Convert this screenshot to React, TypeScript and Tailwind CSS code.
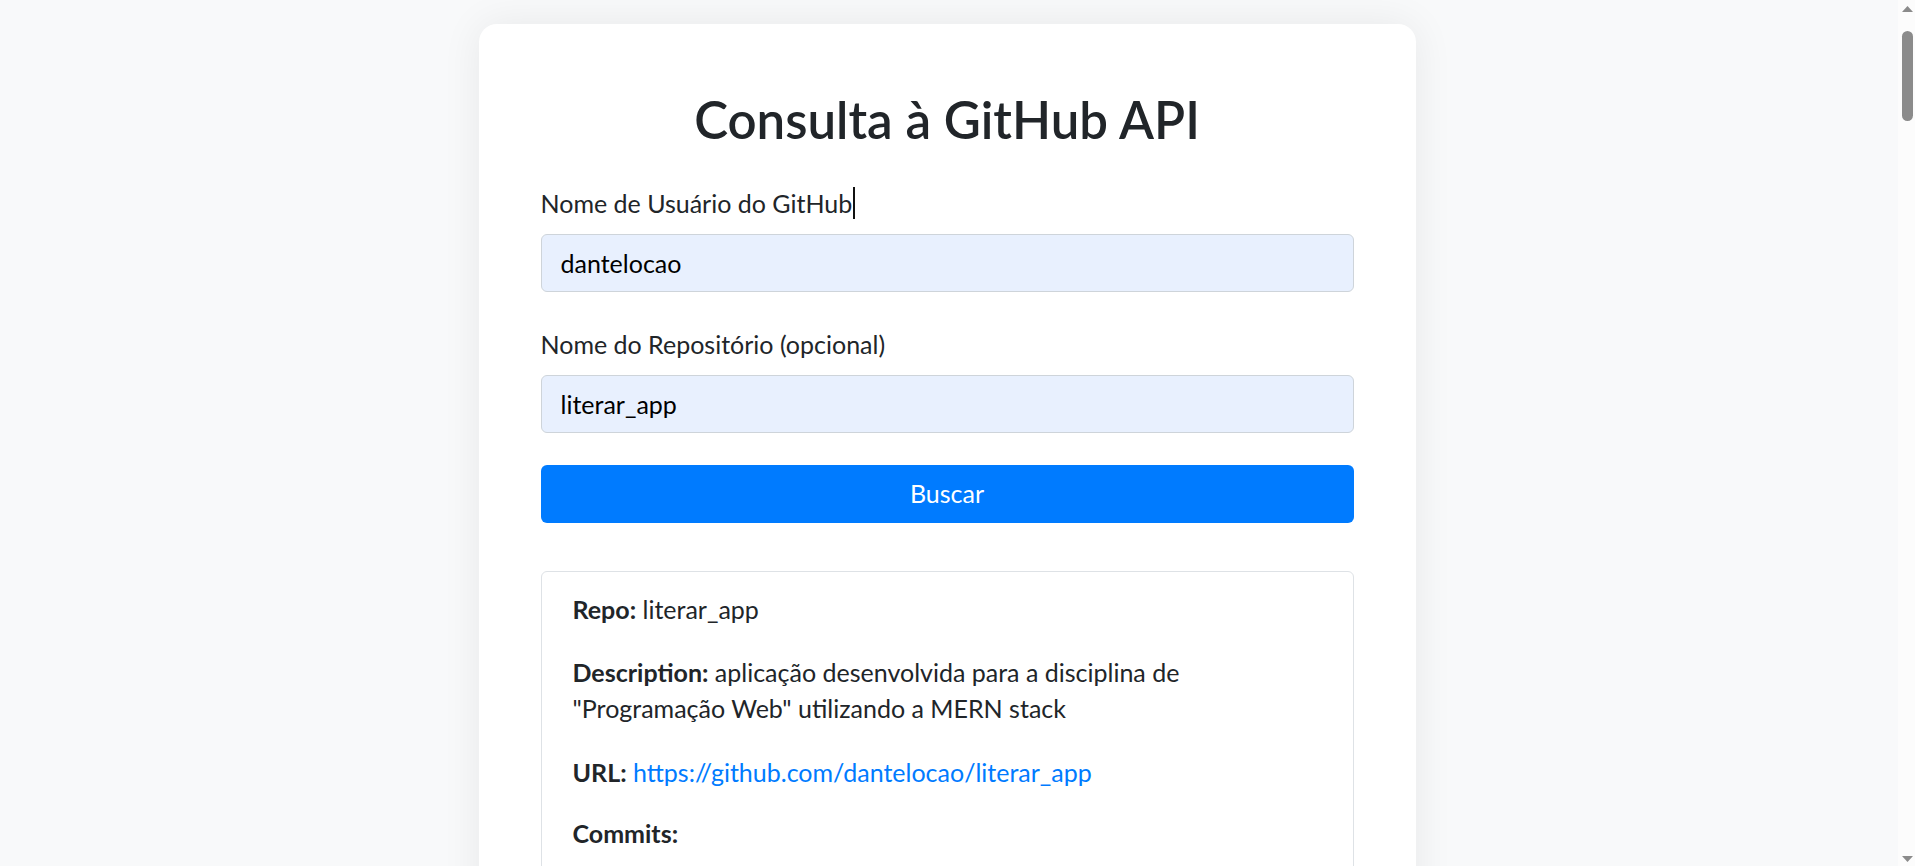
import React, { useState } from "react";

const App: React.FC = () => {
  const [username, setUsername] = useState("dantelocao");
  const [repo, setRepo] = useState("literar_app");

  return (
    <div className="min-h-screen bg-[#f8f9fa] pt-[24px] pr-[21px] pb-[40px] font-['Lato','Noto_Sans',sans-serif] text-[#212529]">
      <div className="mx-auto w-[937px] rounded-[18px] bg-white px-[62px] pt-[66px] pb-[60px] shadow-[0_0_40px_rgba(0,0,0,0.07)]">
        <h1 className="text-center text-[51px] leading-[60px] font-semibold">
          Consulta à GitHub API
        </h1>

        <form className="mt-[35px]" onSubmit={(e) => e.preventDefault()}>
          <label className="flex items-center text-[25px] leading-[36px]">
            Nome de Usuário do GitHub
            <span className="ml-[1px] inline-block h-[32px] w-[2px] bg-[#111]"></span>
          </label>
          <input
            type="text"
            value={username}
            onChange={(e) => setUsername(e.target.value)}
            className="mt-[13px] block h-[58px] w-full rounded-[6px] border border-[#ced4da] bg-[#e8f0fe] px-[19px] text-[25px] text-black outline-none"
          />

          <label className="mt-[34px] block text-[25px] leading-[36px]">
            Nome do Repositório (opcional)
          </label>
          <input
            type="text"
            value={repo}
            onChange={(e) => setRepo(e.target.value)}
            className="mt-[13px] block h-[58px] w-full rounded-[6px] border border-[#ced4da] bg-[#e8f0fe] px-[19px] text-[25px] text-black outline-none"
          />

          <button
            type="submit"
            className="mt-[32px] block h-[58px] w-full rounded-[6px] bg-[#007bff] text-[25px] text-white hover:bg-[#0069d9]"
          >
            Buscar
          </button>
        </form>

        <div className="mt-[48px] rounded-[6px] border border-[#dee2e6] px-[31px] pt-[19px] pb-[240px] text-[25px] leading-[36px]">
          <p>
            <strong>Repo:</strong> literar_app
          </p>
          <p className="mt-[27px]">
            <strong>Description:</strong> aplicação desenvolvida para a disciplina de
            <br />
            "Programação Web" utilizando a MERN stack
          </p>
          <p className="mt-[28px]">
            <strong>URL:</strong>{" "}
            <a href="#" className="text-[#007bff]">
              https://github.com/dantelocao/literar_app
            </a>
          </p>
          <p className="mt-[25px]">
            <strong>Commits:</strong>
          </p>
        </div>
      </div>

      {/* browser scrollbar as it appears in the screenshot */}
      <div className="fixed top-0 right-0 flex h-screen w-[17px] flex-col items-center bg-[#fcfcfc]">
        <svg width="11" height="6" viewBox="0 0 11 6" className="mt-[6px] ml-[1px]">
          <path d="M5.5 0 L11 6 L0 6 Z" fill="#8b8b8b" />
        </svg>
        <div className="mt-[19px] ml-[1px] h-[90px] w-[11px] rounded-full bg-[#8b8b8b]"></div>
        <svg width="11" height="6" viewBox="0 0 11 6" className="mt-auto mb-[4px] ml-[1px]">
          <path d="M0 0 L11 0 L5.5 6 Z" fill="#8b8b8b" />
        </svg>
      </div>
    </div>
  );
};

export default App;
